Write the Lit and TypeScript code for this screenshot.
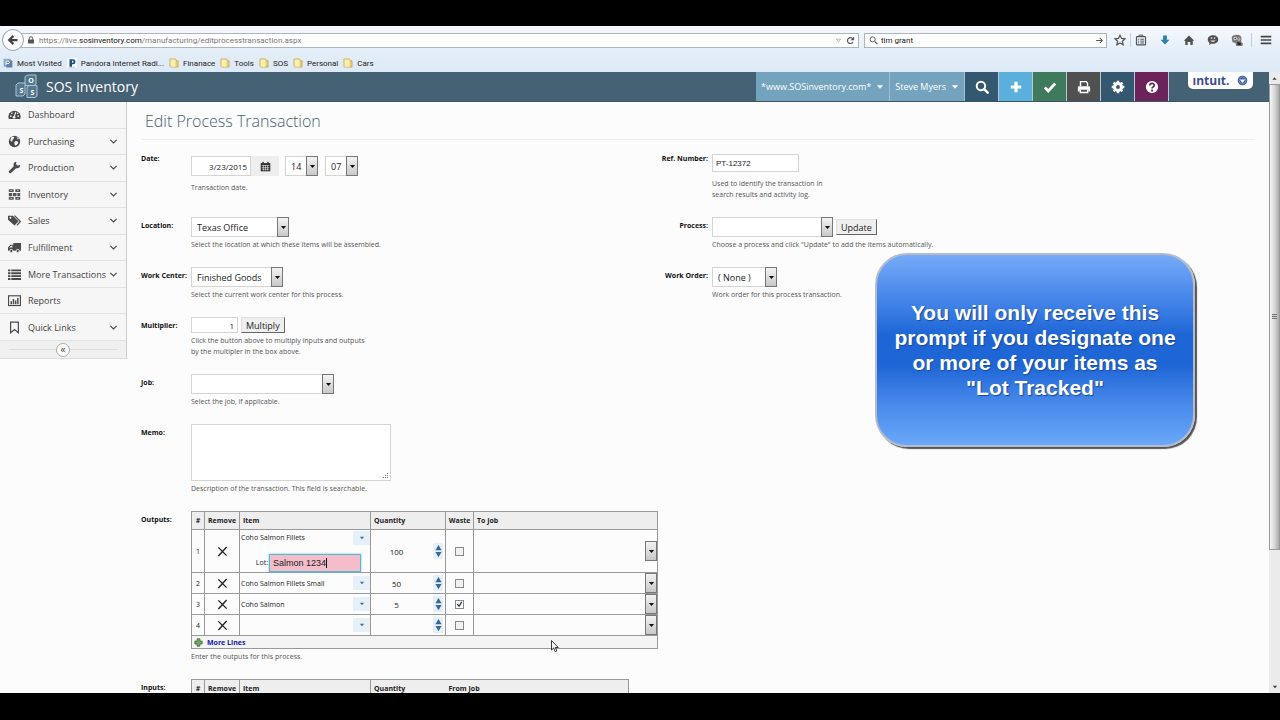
import { LitElement, html, css, svg, nothing, TemplateResult } from "lit";
import { customElement } from "lit/decorators.js";
import { classMap } from "lit/directives/class-map.js";

const icon = (body: unknown, size = 12, box = 16) =>
  html`<svg class="ico" width=${size} height=${size} viewBox="0 0 ${box} ${box}" aria-hidden="true">${body}</svg>`;

const I = {
  back: svg`<path d="M14 8H4M8.500 2.500L3 8l5.500 5.500" fill="none" stroke="#444" stroke-width="3"/>`,
  lock: svg`<path d="M4.500 8V5a3.500 3.500 0 0 1 7 0v3" fill="none" stroke="#555" stroke-width="2"/><rect x="2" y="7" width="12" height="8" rx="1" fill="#555"/>`,
  tri: svg`<path d="M3 5h10l-5 6z" fill="none" stroke="#999" stroke-width="1.500"/>`,
  reload: svg`<path d="M12.500 10.500A5.200 5.200 0 1 1 12 5" fill="none" stroke="#555" stroke-width="2"/><path d="M14.500 1v6.500H8z" fill="#555"/>`,
  mag: svg`<circle cx="6.500" cy="6" r="4.500" fill="none" stroke="#555" stroke-width="1.600"/><path d="M10 9.500l5 5" stroke="#555" stroke-width="2"/>`,
  go: svg`<path d="M2 8h11M8.500 3.500L13 8l-4.500 4.500" fill="none" stroke="#555" stroke-width="1.800"/>`,
  star: svg`<path d="M8 1.500l2 4.400 4.700.5-3.500 3.200 1 4.800L8 12l-4.200 2.400 1-4.800L1.300 6.400 6 5.900z" fill="none" stroke="#555" stroke-width="1.600"/>`,
  list: svg`<rect x="2" y="3.500" width="12" height="11" rx="1" fill="none" stroke="#555" stroke-width="1.600"/><path d="M5.500 3.500V1.500h5v2M4 7h1.500M7 7h5M4 9.500h1.500M7 9.500h5M4 12h1.500M7 12h5" stroke="#555" fill="none" stroke-width="1.300"/>`,
  down: svg`<path d="M5.500 2h5v5.500H14L8 14 2 7.500h3.500z" fill="#2b84a8"/>`,
  home: svg`<path d="M8 2L15 9h-2v5.500H9.800v-4H6.200v4H3V9H1z" fill="#505050"/>`,
  chat: svg`<path d="M8 1.500c4 0 7 2.500 7 5.700S12 13 8 13c-.8 0-1.500-.1-2.200-.3L3 15l.3-3.400C1.800 10.500 1 9 1 7.200 1 4 4 1.500 8 1.500z" fill="#505050"/><path d="M4.500 8.500c1.500 2.500 5.500 2.500 7 0z" fill="#eef"/><path d="M5 5.500h2M9 5.500h2" stroke="#eef" stroke-width="1.400"/>`,
  face: svg`<path d="M1 5c0-3 3-4 7-4s6 2 6 5-1 3 0 5l2 2-1 3H7l-1-4-4-1z" fill="#777"/><circle cx="5.500" cy="6" r="2.200" fill="#ddd"/><circle cx="10.500" cy="6.500" r="2" fill="#ddd"/><circle cx="5.500" cy="6" r="1" fill="#222"/><circle cx="10.500" cy="6.500" r=".9" fill="#222"/><path d="M8 10.500l5 1v3H9z" fill="#222"/>`,
  menu: svg`<path d="M1 3.500h14M1 8h14M1 12.500h14" stroke="#444" stroke-width="2.200"/>`,
  visited: svg`<rect x="1" y="1" width="11" height="13" rx="1" fill="#8ea9c4"/><rect x="5" y="4" width="10" height="11" rx="1" fill="#5f81a5"/><path d="M5 11V5h3a2 2 0 0 1 0 4H5" fill="none" stroke="#fff" stroke-width="1.500"/>`,
  pandora: svg`<rect width="16" height="16" fill="#f7fafd"/><path d="M4 2h5.500a4 4 0 0 1 0 8H8v4H4zM8 4.500v3h1a1.500 1.500 0 0 0 0-3z" fill="#1d4f80" fill-rule="evenodd"/><path d="M3 15h10" stroke="#9ab"/>`,
  folder: svg`<path d="M1.500 1.500h9l1 3h3v10H3.500l-2-1z" fill="#e9cf70" stroke="#b99a3c"/><path d="M2.500 2.500h8V14h-8z" fill="#fbeeb0"/>`,
  search: svg`<circle cx="6.800" cy="6.800" r="4.800" fill="none" stroke="#fff" stroke-width="2.300"/><path d="M10.500 10.500l4 4" stroke="#fff" stroke-width="2.800" stroke-linecap="round"/>`,
  plus: svg`<path d="M8 2v12M2 8h12" stroke="#fff" stroke-width="3.600"/>`,
  check: svg`<path d="M2 8.500l4 4 8-8.500" fill="none" stroke="#fff" stroke-width="3.200"/>`,
  print: svg`<path d="M4 7V1.800h6.500L12 3.500V7" fill="none" stroke="#fff" stroke-width="1.600"/><path d="M1 8.500A1.500 1.500 0 0 1 2.500 7h11A1.500 1.500 0 0 1 15 8.500V13h-2v-2H3v2H1z" fill="#fff"/><path d="M3.800 11v3.200h8.400V11" fill="none" stroke="#fff" stroke-width="1.600"/>`,
  gear: svg`<circle cx="8" cy="8" r="4" fill="none" stroke="#fff" stroke-width="3.600"/><path d="M8 .8v3M8 12.200v3M.8 8h3M12.200 8h3M2.900 2.900l2.100 2.100M11 11l2.100 2.100M2.900 13.100L5 11M11 5l2.100-2.100" stroke="#fff" stroke-width="2.800"/>`,
  help: svg`<circle cx="8" cy="8" r="7" fill="#fff"/><path d="M5.600 6.300c0-3.200 5-3.200 5-.3 0 1.900-2.500 1.900-2.500 3.700" fill="none" stroke="#6b2359" stroke-width="2"/><path d="M7 11h2.200v2H7z" fill="#6b2359"/>`,
  dash: svg`<path d="M1 13.500a7.500 7.500 0 1 1 14 0z" fill="#4a4a4a"/><path d="M7.500 11.500L9.500 5" stroke="#f6f6f6" stroke-width="1.300"/><circle cx="7.500" cy="11.500" r="1.600" fill="#f6f6f6"/><circle cx="3.500" cy="10" r="1" fill="#f6f6f6"/><circle cx="4.800" cy="6.500" r="1" fill="#f6f6f6"/><circle cx="12.500" cy="10" r="1" fill="#f6f6f6"/><circle cx="11.800" cy="6.500" r=".9" fill="#f6f6f6"/>`,
  globe: svg`<circle cx="8" cy="8" r="7" fill="#4a4a4a"/><path d="M4 2.800c2-1 4-.5 3.500 1S5 5.200 5.500 7 3.500 8 2.800 6.500zM8.500 8c2-1.200 4.500 0 4 1.800s-2.500 3-3.300 3.200S7 9.500 8.500 8zM10.500 2l3 2.500-1.500 1z" fill="#f6f6f6"/>`,
  wrench: svg`<path d="M2.800 13.300L9 7.200" stroke="#4a4a4a" stroke-width="3.600" stroke-linecap="round"/><path d="M14.800 4.500a4 4 0 1 1-4.300-3.600L9.800 3.800l2.200 2z" fill="#4a4a4a"/>`,
  boxes: svg`<path d="M1 1.500h6v3.500H1zM9 1.500h6v3.500H9zM1 6h4v4H1zM6 6h4.500v4H6zM11.500 6H15v4h-3.500zM1 11h6v3.500H1zM9 11h6v3.500H9z" fill="#555"/><path d="M3 3.200h2M11 3.200h2M3 12.700h2M11 12.700h2" stroke="#eee" stroke-width=".8"/>`,
  tags: svg`<path d="M0 2h6l7 7-5 5-8-7z" fill="#4a4a4a"/><path d="M8 2l7.300 7.200L11 14" fill="none" stroke="#4a4a4a" stroke-width="1.500"/><circle cx="3" cy="4.500" r="1.200" fill="#f6f6f6"/>`,
  truck: svg`<path d="M6.500 2.500H16v9.500H0V8l2.800-3.500h3.700z" fill="#4a4a4a"/><path d="M1.600 8l2-2.300h1.800V8z" fill="#f6f6f6"/><circle cx="4" cy="12.300" r="2" fill="#4a4a4a" stroke="#f6f6f6"/><circle cx="12" cy="12.300" r="2" fill="#4a4a4a" stroke="#f6f6f6"/>`,
  lines: svg`<path d="M0 3h3M4 3h12M0 6.500h3M4 6.500h12M0 10h3M4 10h12M0 13.500h3M4 13.500h12" stroke="#4a4a4a" stroke-width="2.300"/>`,
  chart: svg`<rect x=".7" y="2.200" width="14.600" height="12" fill="none" stroke="#4a4a4a" stroke-width="1.400"/><path d="M4 12.500V9M6.700 12.500V6M9.400 12.500V8M12.100 12.500V5" stroke="#4a4a4a" stroke-width="1.800"/>`,
  mark: svg`<path d="M3.200 1.500h9.600v13L8 10.500l-4.800 4z" fill="none" stroke="#4a4a4a" stroke-width="1.500"/>`,
  chev: svg`<path d="M2.500 5l5.500 5.500L13.500 5" fill="none" stroke="#444" stroke-width="2"/>`,
  caret: svg`<path d="M2 4.500h12l-6 7z" fill="currentColor"/>`,
  cal: svg`<path d="M1 3h14v12H1z" fill="#333"/><path d="M4.500 1v3M11.500 1v3" stroke="#333" stroke-width="2"/><path d="M2.500 6.500h11M2.500 9.300h11M2.500 12h11M5 6v8M8 6v8M11 6v8" stroke="#eee" stroke-width=".8"/>`,
  x: svg`<path d="M2 2l12 12M14 1.500L2 14.500" fill="none" stroke="#222" stroke-width="2"/>`,
  add: svg`<path d="M5.500 1.500h5v4h4v5h-4v4h-5v-4h-4v-5h4z" fill="#7aa56a" stroke="#41703a" stroke-width="1.500"/>`,
  up: svg`<path d="M8 2l7 12H1z" fill="#3c6790"/>`,
  dn: svg`<path d="M8 14L1 2h14z" fill="#3c6790"/>`,
  ring: svg`<circle cx="8" cy="8" r="7" fill="#3d5ca0"/><circle cx="8" cy="8" r="5" fill="none" stroke="#88a9d6" stroke-width="1"/><path d="M4 6.500h8l-4 5z" fill="#fff"/>`,
};

const face = css`
  :host { font-family: "Open Sans", "Noto Sans", sans-serif; box-sizing: border-box; }
  *, *::before, *::after { box-sizing: border-box; }
  button, input, select, textarea { font: inherit; color: inherit; margin: 0; border-radius: 0; }
  button { border: 0; padding: 0; background: none; display: flex; align-items: center; justify-content: center; }
  a { color: inherit; text-decoration: none; }
  .ico { display: block; flex: none; }
`;

@customElement("browser-bar")
class BrowserBar extends LitElement {
  static styles = [face, css`
    :host { display: block; background: linear-gradient(#f6f9fd, #e3edf8 60%, #dde9f6); color: #222; font-size: 8px; font-family: Roboto, "Noto Sans", sans-serif; }
    .bar { display: flex; align-items: center; height: 28px; }
    .back { width: 22px; height: 22px; border: 1px solid #9aa3ad; border-radius: 50%; background: #fafcfe; margin-left: 2px; z-index: 1; }
    .box { display: flex; align-items: center; height: 15px; border: 1px solid #adb5be; background: #fff; }
    .url { flex: 1; margin-left: -4px; padding: 0 3px 0 6px; gap: 4px; }
    .find input { flex: 1; min-width: 0; border: 0; background: none; padding: 0; outline: 0; height: 13px; }
    .addr { flex: 1; color: #777; white-space: nowrap; }
    .addr b { font-weight: 400; color: #111; }
    .find { width: 243px; margin-left: 5px; padding: 0 2px 0 4px; gap: 3px; }
    .tools { display: flex; align-items: center; gap: 12px; padding: 0 8px 0 7px; }
    .rule { width: 1px; height: 14px; background: #c4ced9; margin: 0 -8px; }
    .rule.last { margin: 0 -4px; }
    .marks { display: flex; align-items: center; height: 18px; padding-left: 3px; gap: 5px; }
    .marks a { display: flex; align-items: center; gap: 4px; white-space: nowrap; }
  `];
  render() {
    const marks: [unknown, string][] = [
      [I.visited, "Most Visited"], [I.pandora, "Pandora Internet Radi..."], [I.folder, "Finanace"],
      [I.folder, "Tools"], [I.folder, "SOS"], [I.folder, "Personal"], [I.folder, "Cars"],
    ];
    return html`
      <div class="bar">
        <button class="back" aria-label="Back">${icon(I.back, 12)}</button>
        <div class="box url">
          ${icon(I.lock, 8)}
          <span class="addr">https://live.<b>sosinventory.com</b>/manufacturing/editprocesstransaction.aspx</span>
          ${icon(I.tri, 7)}<button aria-label="Reload">${icon(I.reload, 9)}</button>
        </div>
        <div class="box find">${icon(I.mag, 9)}<input aria-label="Search" value="tim grant" /><button aria-label="Go">${icon(I.go, 9)}</button></div>
        <div class="tools">
          <button aria-label="Bookmark">${icon(I.star)}</button><span class="rule"></span>
          ${[I.list, I.down, I.home, I.chat, I.face].map((i) => html`<button aria-label="Tool">${icon(i)}</button>`)}
          <span class="rule last"></span><button aria-label="Menu">${icon(I.menu)}</button>
        </div>
      </div>
      <div class="marks">${marks.map(([i, t]) => html`<a href="#">${icon(i, 10)}${t}</a>`)}</div>`;
  }
}

@customElement("app-header")
class AppHeader extends LitElement {
  static styles = [face, css`
    :host { display: flex; height: 30px; background: #456275; color: #fff; border-bottom: 1px solid #39566a; }
    .brand { display: flex; align-items: center; gap: 7px; padding-left: 14px; font-size: 14px; flex: 1; }
    .cube { font: bold 7px "Open Sans", sans-serif; fill: #fff; text-anchor: middle; }
    .drop { display: flex; align-items: center; gap: 5px; padding: 0 5px; font-size: 9px; background: #74a3bd; border-right: 1px solid #9fc0d2; white-space: nowrap; }
    .sq { width: 34px; border-right: 1px solid #b8c8d2; }
    .c0 { background: #34586f; } .c1 { background: #5bafdb; } .c2 { background: #3f7a5c; }
    .c3 { background: #505050; } .c4 { background: #34586f; } .c5 { background: #6b2359; }
    .end { width: 100px; padding-left: 19px; }
    .intuit { width: 65px; height: 17px; background: #fff; border-radius: 0 0 5px 5px; display: flex; align-items: center; justify-content: center; gap: 8px; color: #3c4f94; font-size: 12px; font-weight: 700; line-height: 16px; }
  `];
  render() {
    const sq = [I.search, I.plus, I.check, I.print, I.gear, I.help];
    const names = ["Search", "Add", "Done", "Print", "Settings", "Help"];
    return html`
      <div class="brand">
        <svg width="25" height="25" viewBox="0 0 25 25" aria-hidden="true">
          <g fill="#54788d" stroke="#a9c5d3" stroke-width="1">
            <path d="M11 2.500l3-1.500h8v9l-2 1.500h-9z"/><path d="M2 11l2-2h7v11l-2 2H2z"/><path d="M13 13l2-1.500h8V22l-2 1.500h-8z"/>
          </g>
          <text class="cube" x="17" y="9">O</text><text class="cube" x="7.500" y="19">S</text><text class="cube" x="18.500" y="21">S</text>
        </svg>
        <span>SOS Inventory</span>
      </div>
      <button class="drop">*www.SOSinventory.com*${icon(I.caret, 8)}</button>
      <button class="drop">Steve Myers${icon(I.caret, 8)}</button>
      ${sq.map((s, n) => html`<button class="sq c${n}" aria-label=${names[n]}>${icon(s, 14)}</button>`)}
      <div class="end"><button class="intuit">ıntuıt.${icon(I.ring, 11)}</button></div>`;
  }
}

@customElement("side-nav")
class SideNav extends LitElement {
  static styles = [face, css`
    :host { display: block; width: 127px; flex: none; align-self: flex-start; background: #f6f6f6; border-right: 1px solid #ccc; color: #444; font-size: 9px; }
    nav { display: grid; grid-template: repeat(9, 1fr) / minmax(0, 1fr); height: 239px; }
    a { display: flex; align-items: center; gap: 7px; padding: 0 8px; border-bottom: 1px solid #e2e2e2; }
    .t { flex: 1; min-width: 0; white-space: nowrap; }
    .fold { display: flex; align-items: center; height: 18px; padding: 0 9px; background: #f0f0f0; border-bottom: 1px solid #ddd; }
    .fold::before, .fold::after { content: ""; flex: 1; height: 1px; background: #ddd; }
    .fold button { width: 14px; height: 14px; border: 1px solid #aaa; border-radius: 50%; background: #fff; font-size: 10px; line-height: 10px; padding-bottom: 2px; }
  `];
  render() {
    const items: [unknown, string, boolean][] = [
      [I.dash, "Dashboard", false], [I.globe, "Purchasing", true], [I.wrench, "Production", true],
      [I.boxes, "Inventory", true], [I.tags, "Sales", true], [I.truck, "Fulfillment", true],
      [I.lines, "More Transactions", true], [I.chart, "Reports", false], [I.mark, "Quick Links", true],
    ];
    return html`<nav>${items.map(([i, t, c]) => html`<a href="#">${icon(i, 13)}<span class="t">${t}</span>${c ? icon(I.chev, 9) : nothing}</a>`)}</nav>
      <div class="fold"><button aria-label="Collapse">«</button></div>`;
  }
}

type Line = { item: string; qty: string; waste: boolean; lot?: string };

@customElement("process-form")
class ProcessForm extends LitElement {
  static styles = [face, css`
    :host { display: block; flex: 1; min-width: 0; padding: 0 14px; color: #222; font-size: 9px; }
    h1 { margin: 0; padding-left: 4px; height: 38px; line-height: 38px; border-bottom: 1px solid #eee; font-size: 16px; font-weight: 300; color: #456275; }
    form { display: grid; grid-template-columns: minmax(0, 465fr) minmax(0, 535fr); row-gap: 17px; padding-top: 10px; }
    .row { grid-column: 1; display: grid; grid-template-columns: 50px minmax(0, 1fr); align-items: start; }
    .row.right { grid-column: 2; grid-template-columns: 49px minmax(0, 1fr); column-gap: 4px; }
    .row.right .lab { text-align: right; }
    .lab { padding-top: 1px; font-size: 7px; font-weight: 700; line-height: 16px; white-space: nowrap; color: #111; }
    .ctl { display: flex; align-items: center; gap: 3px; }
    .first .ctl { margin-top: 4px; }
    .first .date { margin-top: 6px; }
    .first .hint { margin-top: 6px; }
    .hint { margin: 2px 0 0; font-size: 7px; line-height: 11px; color: #555; }
    .narrow { max-width: 130px; } .mid { max-width: 182px; }
    .in { border: 1px solid #d4d4d4; background: #fff; outline: 0; padding: 0 3px; font-size: 8px; }
    .num { text-align: right; }
    .d { width: 60px; height: 20px; } .m { width: 47px; height: 16px; } .r { width: 87px; height: 18px; font-family: "Liberation Sans", sans-serif; }
    .calb { width: 28px; height: 20px; background: #eee; margin-left: -4px; margin-right: 2px; }
    .date { gap: 4px; } .date .sel { margin-right: 3px; }
    .sel { position: relative; display: block; height: 20px; }
    .sel select { appearance: none; width: 100%; height: 100%; border: 1px solid #d4d4d4; background: #fff; padding: 0 12px 0 5px; outline: 0; }
    .sel .ar { position: absolute; right: 0; top: 0; bottom: 0; width: 12px; border: 1px solid #777; background: linear-gradient(#f3f3f3, #c8c8c8); display: grid; place-items: center; pointer-events: none; color: #111; }
    .w33 { width: 33px; } .w98 { width: 98px; } .w92 { width: 92px; } .w143 { width: 143px; } .w121 { width: 121px; } .w65 { width: 65px; }
    .push { height: 16px; padding: 0 4px; background: #efefef; border: 1px solid #e0e0e0; border-right-color: #666; border-bottom-color: #666; }
    textarea { display: block; width: 200px; height: 57px; border: 1px solid #d4d4d4; background: #fff; resize: none; padding: 3px; outline: 0; }
    .memo { position: relative; width: 200px; }
    .grip { position: absolute; right: 2px; bottom: 2px; }
    table { border-collapse: collapse; table-layout: fixed; font-size: 7px; }
    .out { width: 467px; } .inp { width: 438px; }
    th, td { border: 1px solid #999; padding: 0; }
    th { background: #eee; height: 18px; text-align: left; padding-left: 3px; font-weight: 700; }
    th.c, td.c { text-align: center; padding: 0; }
    .inp th:last-child { border-left: 0; }
    .inp .k3 { border-right: 0; }
    .k0 { width: 13px; } .k1 { width: 35px; } .k2 { width: 131px; } .k3 { width: 75px; } .k4 { width: 28px; }
    td { height: 21px; vertical-align: middle; }
    tr.tall td { height: 43px; }
    .foot td { height: 13px; background: #f4f4f4; }
    .more { display: flex; align-items: center; gap: 4px; padding-left: 2px; font-weight: 700; color: #1616a8; }
    td button { margin: 0 auto; }
    .combo { display: flex; justify-content: space-between; align-items: center; height: 18px; }
    .tall .combo { height: 15px; }
    .combo input, .qty input { border: 0; background: none; outline: 0; padding: 0 1px; min-width: 0; flex: 1; height: 14px; }
    .combo button { width: 17px; height: 14px; margin: 0; background: #e6f0f9; color: #4c7394; }
    .lot { display: flex; align-items: center; justify-content: flex-end; padding: 8px 9px 0 0; gap: 1px; height: 27px; }
    .lotbox { position: relative; }
    .lot input { width: 92px; height: 18px; background: #f5bccb; border: 1px solid #5bb8cf; padding: 0 3px; font: 9px "Liberation Sans", sans-serif; outline: 0; box-shadow: 0 0 2px #5bc8e0; }
    .cur { position: absolute; left: 57px; top: 4px; width: 1px; height: 10px; background: #111; }
    .qty { display: flex; align-items: center; }
    .qty input { text-align: center; padding-right: 12px; font-size: 8px; }
    .spin { width: 10px; margin-right: 2px; background: #e4effa; padding: 1px 0; }
    .spin button { width: 10px; height: 7px; }
    .tick { appearance: none; display: block; width: 9px; height: 9px; margin: 0 auto; border: 1px solid #888; background: #f1f1f1; }
    .tick:checked { background: #fff url("data:image/svg+xml,%3Csvg xmlns='http://www.w3.org/2000/svg' viewBox='0 0 8 8'%3E%3Cpath d='M1.500 3.500l2 2.500 3-5' fill='none' stroke='%23234' stroke-width='1.400'/%3E%3C/svg%3E"); }
    td .sel { width: 100%; height: 20px; }
    td .sel select { border: 0; background: none; }
  `];

  sel(id: string, w: string, value: string, label?: string): TemplateResult {
    return html`<span class=${classMap({ sel: true, [w || "full"]: true })}><select id=${id} aria-label=${label ?? nothing}><option>${value}</option></select><span class="ar">${icon(I.caret, 7)}</span></span>`;
  }

  row(id: string, label: string, ctl: unknown, hint: string, cls = "", hintCls = "", ctlCls = "") {
    return html`<div class="row ${cls}"><label class="lab" for=${id}>${label}</label>
      <div><div class="ctl ${ctlCls}">${ctl}</div>${hint ? html`<p class="hint ${hintCls}">${hint}</p>` : nothing}</div></div>`;
  }

  line(l: Line, n: number) {
    return html`<tr class=${classMap({ tall: !!l.lot })}>
      <td class="c">${n + 1}</td>
      <td class="c"><button type="button" aria-label="Remove line">${icon(I.x, 11)}</button></td>
      <td><div class="combo"><input aria-label="Item" .value=${l.item} /><button type="button" aria-label="Choose item">${icon(I.caret, 6)}</button></div>
        ${l.lot ? html`<div class="lot"><label for="lot">Lot:</label><span class="lotbox"><input id="lot" .value=${l.lot} /><span class="cur"></span></span></div>` : nothing}</td>
      <td><div class="qty"><input aria-label="Quantity" .value=${l.qty} /><span class="spin"><button type="button" aria-label="More">${icon(I.up, 7)}</button><button type="button" aria-label="Less">${icon(I.dn, 7)}</button></span></div></td>
      <td><input class="tick" type="checkbox" aria-label="Waste" .checked=${l.waste} /></td>
      <td>${this.sel(`job${n}`, "", "", "To Job")}</td></tr>`;
  }

  render() {
    const lines: Line[] = [
      { item: "Coho Salmon Fillets", qty: "100", waste: false, lot: "Salmon 1234" },
      { item: "Coho Salmon Fillets Small", qty: "50", waste: false },
      { item: "Coho Salmon", qty: "5", waste: true },
      { item: "", qty: "", waste: false },
    ];
    return html`<h1>Edit Process Transaction</h1>
      <form>
        ${this.row("date", "Date:", html`<input id="date" class="in num d" value="3/23/2015" /><button type="button" class="calb" aria-label="Calendar">${icon(I.cal, 11)}</button>${this.sel("hour", "w33", "14", "Hour")}${this.sel("minute", "w33", "07", "Minute")}`, "Transaction date.", "first", "", "date")}
        ${this.row("ref", "Ref. Number:", html`<input id="ref" class="in r" value="PT-12372" />`, "Used to identify the transaction in search results and activity log.", "right first", "narrow")}
        ${this.row("loc", "Location:", this.sel("loc", "w98", "Texas Office"), "Select the location at which these items will be assembled.")}
        ${this.row("proc", "Process:", html`${this.sel("proc", "w121", "")}<button type="button" class="push">Update</button>`, "Choose a process and click \"Update\" to add the items automatically.", "right")}
        ${this.row("wc", "Work Center:", this.sel("wc", "w92", "Finished Goods"), "Select the current work center for this process.")}
        ${this.row("wo", "Work Order:", this.sel("wo", "w65", "( None )"), "Work order for this process transaction.", "right")}
        ${this.row("mult", "Multiplier:", html`<input id="mult" class="in num m" value="1" /><button type="button" class="push">Multiply</button>`, "Click the button above to multiply inputs and outputs by the multipler in the box above.", "", "mid")}
        ${this.row("job", "Job:", this.sel("job", "w143", ""), "Select the job, if applicable.")}
        ${this.row("memo", "Memo:", html`<span class="memo"><textarea id="memo"></textarea><svg class="grip" width="7" height="7" viewBox="0 0 7 7" aria-hidden="true"><path d="M5 1h1v1H5zM3 3h1v1H3zM5 3h1v1H5zM1 5h1v1H1zM3 5h1v1H3zM5 5h1v1H5z" fill="#777"/></svg></span>`, "Description of the transaction. This field is searchable.")}
        <div class="row"><span class="lab">Outputs:</span><div>
          <table class="out">
            <thead><tr><th class="k0 c">#</th><th class="k1 c">Remove</th><th class="k2">Item</th><th class="k3">Quantity</th><th class="k4 c">Waste</th><th>To Job</th></tr></thead>
            <tbody>${lines.map((l, n) => this.line(l, n))}
              <tr class="foot"><td colspan="6"><a class="more" href="#">${icon(I.add, 9)}More Lines</a></td></tr></tbody>
          </table>
          <p class="hint">Enter the outputs for this process.</p></div></div>
        <div class="row"><span class="lab">Inputs:</span>
          <table class="inp"><thead><tr><th class="k0 c">#</th><th class="k1 c">Remove</th><th class="k2">Item</th><th class="k3">Quantity</th><th>From Job</th></tr></thead></table></div>
      </form>`;
  }
}

@customElement("app-root")
class AppRoot extends LitElement {
  static styles = [face, css`
    :host { display: flex; flex-direction: column; height: 100vh; padding: 26px 0 27px; background: #000; overflow: hidden; position: relative; }
    browser-bar { flex: none; }
    .view { flex: 1; min-height: 0; display: flex; background: #fcfcfc; overflow: hidden; }
    .page { flex: 1; min-width: 0; overflow: hidden; }
    .body { display: flex; }
    .scroll { width: 11px; display: flex; flex-direction: column; background: #ebebeb; align-items: stretch; color: #444; }
    .scroll .cap { height: 12px; display: grid; place-items: center; }
    .scroll .track { flex: 1; }
    .scroll .thumb { height: 78%; border: 1px solid #999; background: linear-gradient(90deg, #f5f5f5, #d8d8d8 50%, #a9a9a9); display: grid; place-items: center; }
    .grip { width: 5px; height: 5px; background: repeating-linear-gradient(#777 0 1px, #ccc 1px 2px); }
    .note { position: absolute; top: 253px; right: 85px; width: 320px; height: 194px; border-radius: 32px; border: 2px solid #b4bccb; box-shadow: 2px 2px 1px #555; display: flex; align-items: center; justify-content: center; text-align: center; color: #fff; font: bold 21px/25px "Liberation Sans", sans-serif; text-shadow: 1px 1px 1px #1a4a9c; background: linear-gradient(#76aaf8, #4888ea 22%, #1e66d6 42%, #1e66d6 58%, #4888ea 78%, #69a8fa); }
    .pointer { position: absolute; left: 551px; top: 640px; }
  `];
  render() {
    return html`
      <browser-bar></browser-bar>
      <div class="view">
        <div class="page"><app-header></app-header><div class="body"><side-nav></side-nav><process-form></process-form></div></div>
        <div class="scroll"><span class="cap">${icon(svg`<path d="M3 11h10L8 5z" fill="currentColor"/>`, 7)}</span>
          <div class="track"><div class="thumb"><span class="grip"></span></div></div>
          <span class="cap">${icon(I.caret, 6)}</span></div>
      </div>
      <div class="note" role="note"><span>You will only receive this<br />prompt if you designate one<br />or more of your items as<br />"Lot Tracked"</span></div>
      <svg class="pointer" width="8" height="13" viewBox="0 0 8 13" aria-hidden="true"><path d="M.5.500v9.500l2.200-2 1.500 3.700 1.600-.7-1.500-3.500h3z" fill="#fff" stroke="#222" stroke-width=".9"/></svg>`;
  }
}
